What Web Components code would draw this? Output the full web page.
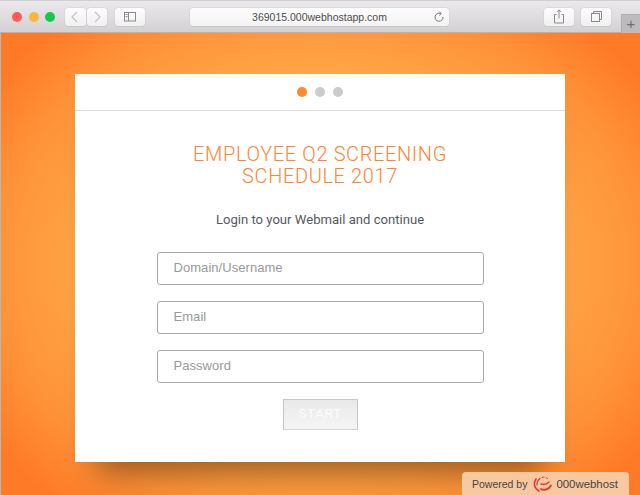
<!DOCTYPE html>
<html>
<head>
<meta charset="utf-8">
<title>Employee Q2 Screening</title>
<style>
	html, body { margin: 0; height: 100%; overflow: hidden; }
	body { font-family: Roboto, "Liberation Sans", sans-serif; }
</style>
</head>
<body>
<x-window>
	<x-toolbar slot="bar" url="369015.000webhostapp.com"></x-toolbar>
	<x-card>
		<x-dots slot="head"></x-dots>
		<h1-title>EMPLOYEE Q2 SCREENING<br>SCHEDULE 2017</h1-title>
		<x-sub>Login to your Webmail and continue</x-sub>
		<x-field placeholder="Domain/Username"></x-field>
		<x-field placeholder="Email"></x-field>
		<x-field placeholder="Password"></x-field>
		<x-start>START</x-start>
	</x-card>
	<x-powered slot="over"></x-powered>
</x-window>
<script>
( function() {
	function define( name, html, methods ) {
		class El extends HTMLElement {
			constructor() {
				super() ;
				this.sroot = this.attachShadow({mode:'open'}) ;
				this.sroot.innerHTML = html ;
			}
			connectedCallback() {
				if ( methods ) methods.call(this) ;
			}
		}
		customElements.define(name,El) ;
	}

	define('x-window',`<style>
		:host { display: flex; flex-direction: column; width: 640px; height: 495px; position: relative; overflow: hidden; }
		.stage { flex: 1; display: flex; justify-content: center; align-items: flex-start; padding-top: 41px; box-shadow: inset 1px 0 0 #a9bcc6;
			background: radial-gradient(ellipse 62% 68% at 50% 50%, #ffb24f 0%, #ffab4a 55%, #ff9238 82%, #ff7a27 100%); }
	</style>
	<slot name="bar"></slot>
	<div class="stage"><slot></slot></div>
	<slot name="over"></slot>`) ;

	define('x-toolbar',`<style>
		:host { display: flex; align-items: center; height: 33px; box-sizing: border-box; position: relative;
			background: linear-gradient(#ebe9eb,#d3d1d3); border-bottom: 1px solid #b4b2b4; border-top: 1px solid #d0ced0; }
		.light { width: 10px; height: 10px; border-radius: 50%; margin-right: 6.5px; }
		.lights { display: flex; margin-left: 12px; width: 53px; }
		.btn { height: 18px; display: flex; align-items: center; justify-content: center; background: linear-gradient(#fdfdfd,#f0f0f0);
			border-radius: 3.5px; box-shadow: 0 0 0 .5px #cfcdcf, 0 1px 0 #c4c2c4; }
		.btn svg { display: block; fill: none; stroke: #8a8a8a; stroke-width: 1; }
		.nav { display: flex; gap: 1px; width: 42px; }
		.nav .btn { width: 20.5px; }
		.nav svg { stroke: #c2c2c2; stroke-width: 1.2; }
		.side { width: 30px; margin-left: 8px; }
		.url { width: 259px; margin-left: 45px; height: 18px; position: relative; background: linear-gradient(#fdfdfd,#f3f3f3); border-radius: 3.5px;
			box-shadow: 0 0 0 .5px #cfcdcf, 0 1px 0 #c4c2c4; font: 10.5px "Liberation Sans", sans-serif; color: #4d4d4d;
			display: flex; align-items: center; justify-content: center; }
		.url svg { position: absolute; right: 4px; top: 3px; fill: none; stroke: #777; stroke-width: 1; }
		.r { width: 30px; margin-left: 95px; }
		.r + .r { margin-left: 7px; }
		.plus { position: absolute; right: 0; top: 13px; width: 19px; height: 19px; background: #bdbbbd; border: 1px solid #aeacae; border-width: 1px 0 0 1px;
			box-sizing: border-box; font: 300 15px/17px "Liberation Sans", sans-serif; color: #6d6d6d; text-align: center; }
	</style>
	<div class="lights">
		<div class="light" style="background:#fc5b57"></div>
		<div class="light" style="background:#fdb53e"></div>
		<div class="light" style="background:#19c84a"></div>
	</div>
	<div class="nav">
		<div class="btn"><svg width="10" height="12" viewBox="0 0 10 12"><path d="M7 1 L2 6 L7 11"/></svg></div>
		<div class="btn"><svg width="10" height="12" viewBox="0 0 10 12"><path d="M3 1 L8 6 L3 11"/></svg></div>
	</div>
	<div class="btn side"><svg width="14" height="11" viewBox="0 0 14 11"><rect x="1.5" y="1.5" width="11" height="8.5"/><path d="M5.5 1.5 V10 M2.5 3.5 H4.5 M2.5 5.5 H4.5"/></svg></div>
	<div class="url"><span id="u"></span>
		<svg width="12" height="12" viewBox="0 0 12 12"><path d="M7.6 2.6 A4 4 0 1 0 10 6"/><path d="M6.3 .6 L8.3 2.6 L6.3 4.4" fill="none"/></svg>
	</div>
	<div class="btn r"><svg width="12" height="15" viewBox="0 0 12 15"><path d="M3.5 5.5 H1.5 V14 H10.5 V5.5 H8.5 M6 9.5 V1 M3.8 3 L6 .8 L8.2 3"/></svg></div>
	<div class="btn r"><svg width="13" height="13" viewBox="0 0 13 13"><rect x="1.5" y="3.5" width="8" height="8"/><path d="M3.5 3.5 V1.5 H11.5 V9.5 H9.5"/></svg></div>
	<div class="plus">+</div>`,function() {
		this.sroot.getElementById('u').textContent = this.getAttribute('url') ;
	}) ;

	define('x-card',`<style>
		:host { display: block; width: 490px; height: 388px; background: #fff; box-shadow: 0 32px 30px -22px rgba(60,35,10,.55); }
		.body { display: flex; flex-direction: column; align-items: center; }
	</style>
	<slot name="head"></slot>
	<div class="body"><slot></slot></div>`) ;

	define('x-dots',`<style>
		:host { display: flex; justify-content: center; align-items: center; gap: 8px; height: 36px; border-bottom: 1px solid #dedede; }
		i { width: 10px; height: 10px; border-radius: 50%; background: #cbcbcb; }
		i:first-of-type { background: #ff8a2d; }
	</style><i></i><i></i><i></i>`) ;

	define('h1-title',`<style>
		:host { display: block; margin-top: 32px; font: 300 20px/22px Roboto, sans-serif; letter-spacing: .62px; color: #ff8432; text-align: center; }
	</style><slot></slot>`) ;

	define('x-sub',`<style>
		:host { display: block; margin: 23px 0 6px; font: 400 13.1px/20px Roboto, sans-serif; color: #55595f; }
	</style><slot></slot>`) ;

	define('x-field',`<style>
		:host { display: block; width: 327px; height: 33px; box-sizing: border-box; margin-top: 16px; border: 1px solid #a9a9a9; border-radius: 3px; background: #fff; }
		.ph { padding-left: 16px; font: 13px/29px "Liberation Sans", Arial, sans-serif; color: #999; letter-spacing: .05px; }
	</style><div class="ph"></div>`,function() {
		this.sroot.querySelector('.ph').textContent = this.getAttribute('placeholder') ;
	}) ;

	define('x-start',`<style>
		:host { display: block; width: 75px; height: 31px; box-sizing: border-box; margin-top: 16px; border: 1px solid #c6c6c6; border-bottom-color: #d4d4d4;
			background: linear-gradient(#e9e9e9,#f5f5f5); color: #fcfcfc; font: 400 13.5px/27px Roboto, sans-serif; letter-spacing: .6px; text-align: center; }
	</style><slot></slot>`) ;

	define('x-powered',`<style>
		:host { position: absolute; left: 462px; top: 472px; width: 167px; height: 23px; box-sizing: border-box; display: flex; align-items: center; padding-left: 10px;
			background: #f8c8a0; border-radius: 4px 4px 0 0; font: 10.5px "Liberation Sans", sans-serif; color: #4a4440; white-space: nowrap; }
		svg { margin: 0 3px 0 5px; display: block; flex: none; }
		b { font-weight: 400; font-size: 11.4px; color: #444; }
	</style>
	<span>Powered by</span>
	<svg width="21" height="18" viewBox="0 0 21 18" fill="none" stroke="#e0353a" stroke-linecap="round">
		<path d="M7 16 C2 13 1 8 4 4" stroke-width="1.6"/>
		<path d="M5 10 C5 7 6 5 8 3.5" stroke-width="1.2"/>
		<path d="M10 2.5 L12 2" stroke-width="1"/>
		<path d="M14 2.5 L15.5 3.5" stroke-width="1"/>
		<path d="M9 14 C12 16 17 14 19 10.5" stroke-width="1.9"/>
		<path d="M9 9 C12 10 15 9 17 7" stroke-width="1.4"/>
	</svg>
	<b>000webhost</b>`) ;
} ) () ;
</script>
</body>
</html>
